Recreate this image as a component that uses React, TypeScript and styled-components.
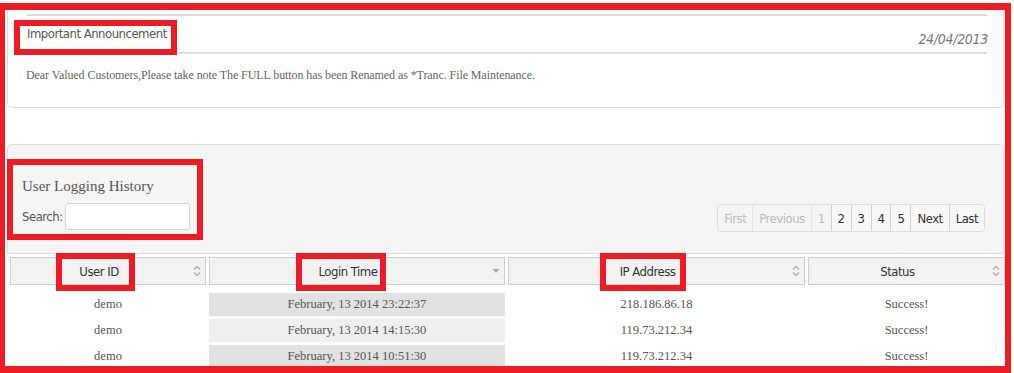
import React from 'react';
import styled, { createGlobalStyle } from 'styled-components';

const GlobalStyle = createGlobalStyle`
  html, body {
    margin: 0;
    padding: 0;
    background: #ffffff;
  }
  * {
    box-sizing: border-box;
  }
`;

const narrow = `"DejaVu Sans Condensed", "DejaVu Sans", "Liberation Sans", sans-serif`;
const serif = `"Liberation Serif", "Times New Roman", serif`;

const Frame = styled.div`
  margin-top: 3px;
  width: 1011px;
  height: 370px;
  border: solid #ed1c24;
  border-width: 7px 6px 7px 5px;
  padding: 0 1px 0 2px;
  overflow: hidden;
`;

const Mark = styled.span<{ $t: number; $r: number; $b: number; $l: number; $w?: number }>`
  position: relative;
  display: inline-block;

  &::after {
    content: '';
    position: absolute;
    top: ${(p) => -p.$t}px;
    right: ${(p) => -p.$r}px;
    bottom: ${(p) => -p.$b}px;
    left: ${(p) => -p.$l}px;
    border: ${(p) => p.$w ?? 6}px solid #ed1c24;
    pointer-events: none;
  }
`;

const Announcement = styled.section`
  border: 1px solid #dddddd;
  border-top: none;
  border-radius: 0 0 5px 5px;
  background: #ffffff;
  padding: 4px 16px 0 19px;
  height: 98px;
`;

const AnnouncementHeader = styled.header`
  height: 40px;
  border-top: 2px solid #dddddd;
  border-bottom: 2px solid #dddddd;
  display: flex;
  justify-content: space-between;
  align-items: center;
`;

const AnnouncementTitle = styled.h3`
  margin: 0;
  font-family: ${narrow};
  font-weight: normal;
  font-size: 13px;
  letter-spacing: -0.5px;
  line-height: 16px;
  color: #555555;
`;

const AnnouncementDate = styled.span`
  margin-top: 9px;
  margin-right: -1px;
  font-family: ${narrow};
  font-style: italic;
  font-size: 14px;
  letter-spacing: -0.3px;
  color: #777777;
`;

const AnnouncementBody = styled.p`
  margin: 14px 0 0 -1px;
  font-family: ${serif};
  font-size: 12px;
  letter-spacing: -0.08px;
  line-height: 15px;
  color: #666666;
`;

const Toolbar = styled.div`
  margin-top: 36px;
  height: 110px;
  background: #f5f5f5;
  border: 1px solid #dddddd;
  border-radius: 5px 5px 0 0;
  padding: 30px 18px 21px 14px;
  display: flex;
  justify-content: space-between;
  align-items: flex-end;
`;

const SearchBlock = styled.div`
  margin-bottom: 2px;
`;

const ToolbarTitle = styled.h2`
  margin: 0 0 7px;
  font-family: ${serif};
  font-weight: normal;
  font-size: 15px;
  line-height: 20px;
  color: #555555;
`;

const SearchRow = styled.label`
  display: flex;
  align-items: center;
  gap: 2px;
  font-family: ${narrow};
  font-size: 13px;
  letter-spacing: -0.5px;
  color: #555555;
`;

const SearchInput = styled.input`
  width: 125px;
  height: 27px;
  border: 1px solid #d6d6d6;
  border-radius: 3px;
  background: #ffffff;
  outline: none;
`;

const Pager = styled.div`
  display: flex;
  height: 28px;
  border: 1px solid #dcdcdc;
  border-radius: 4px;
  overflow: hidden;
`;

const PageButton = styled.span<{ $disabled?: boolean }>`
  display: flex;
  align-items: center;
  justify-content: center;
  padding: 0 6px;
  font-family: ${narrow};
  font-size: 13px;
  letter-spacing: -0.5px;
  color: ${(p) => (p.$disabled ? '#bbbbbb' : '#333333')};
  background: ${(p) => (p.$disabled ? '#f5f5f5' : '#f8f8f8')};
  border-left: 1px solid ${(p) => (p.$disabled ? '#e6e6e6' : '#d2d2d2')};

  &:first-child {
    border-left: none;
  }
`;

const Table = styled.div`
  margin: 3px 1px 0 3px;
  display: grid;
  grid-template-columns: 196px 296px 297px 197px;
  column-gap: 3px;
  row-gap: 3px;
`;

const HeadCell = styled.div`
  position: relative;
  height: 28px;
  margin-bottom: 5px;
  border: 1px solid #cfcfcf;
  background: #f2f2f2;
  display: flex;
  align-items: center;
  justify-content: center;
  padding-right: 18px;
  font-family: ${narrow};
  font-size: 13px;
  letter-spacing: -0.5px;
  color: #333333;
`;

const SortIcon = styled.svg`
  position: absolute;
  right: 4px;
  top: 50%;
  transform: translateY(-50%);
`;

const Cell = styled.div<{ $shade?: string }>`
  height: 23px;
  display: flex;
  align-items: center;
  justify-content: center;
  background: ${(p) => p.$shade ?? 'transparent'};
  font-family: ${serif};
  font-size: 12.5px;
  color: #555555;
`;

const BothWays = () => (
  <SortIcon width="8" height="13" viewBox="0 0 8 13">
    <path d="M1 5 L4 2 L7 5 M1 8 L4 11 L7 8" fill="none" stroke="#a8a8a8" strokeWidth="1.2" />
  </SortIcon>
);

const Down = () => (
  <SortIcon width="8" height="6" viewBox="0 0 8 6">
    <path d="M0.5 1 L7.5 1 L4 5 Z" fill="#a8a8a8" />
  </SortIcon>
);

const rows = [
  { user: 'demo', time: 'February, 13 2014 23:22:37', ip: '218.186.86.18', status: 'Success!' },
  { user: 'demo', time: 'February, 13 2014 14:15:30', ip: '119.73.212.34', status: 'Success!' },
  { user: 'demo', time: 'February, 13 2014 10:51:30', ip: '119.73.212.34', status: 'Success!' },
];

const pages: { label: string; disabled?: boolean }[] = [
  { label: 'First', disabled: true },
  { label: 'Previous', disabled: true },
  { label: '1', disabled: true },
  { label: '2' },
  { label: '3' },
  { label: '4' },
  { label: '5' },
  { label: 'Next' },
  { label: 'Last' },
];

const App: React.FC = () => {
  return (
    <>
      <GlobalStyle />
      <Frame>
        <Announcement>
          <AnnouncementHeader>
            <AnnouncementTitle>
              <Mark $t={6} $r={10} $b={13} $l={13}>Important Announcement</Mark>
            </AnnouncementTitle>
            <AnnouncementDate>24/04/2013</AnnouncementDate>
          </AnnouncementHeader>
          <AnnouncementBody>
            Dear Valued Customers,Please take note The FULL button has been Renamed as *Tranc. File Maintenance.
          </AnnouncementBody>
        </Announcement>

        <Toolbar>
          <SearchBlock>
            <Mark $t={17} $r={13} $b={10} $l={15}>
              <ToolbarTitle>User Logging History</ToolbarTitle>
              <SearchRow>
                Search:
                <SearchInput type="text" />
              </SearchRow>
            </Mark>
          </SearchBlock>
          <Pager>
            {pages.map((p) => (
              <PageButton key={p.label} $disabled={p.disabled}>
                {p.label}
              </PageButton>
            ))}
          </Pager>
        </Toolbar>

        <Table>
          <HeadCell>
            <Mark $t={11} $r={16} $b={12} $l={23}>User ID</Mark>
            <BothWays />
          </HeadCell>
          <HeadCell>
            <Mark $t={11} $r={9} $b={12} $l={23}>Login Time</Mark>
            <Down />
          </HeadCell>
          <HeadCell>
            <Mark $t={11} $r={11} $b={12} $l={20}>IP Address</Mark>
            <BothWays />
          </HeadCell>
          <HeadCell>
            Status
            <BothWays />
          </HeadCell>

          {rows.map((r, i) => (
            <React.Fragment key={r.time}>
              <Cell>{r.user}</Cell>
              <Cell $shade={i % 2 === 0 ? '#e2e2e2' : '#efefef'}>{r.time}</Cell>
              <Cell>{r.ip}</Cell>
              <Cell>{r.status}</Cell>
            </React.Fragment>
          ))}
        </Table>
      </Frame>
    </>
  );
};

export default App;
